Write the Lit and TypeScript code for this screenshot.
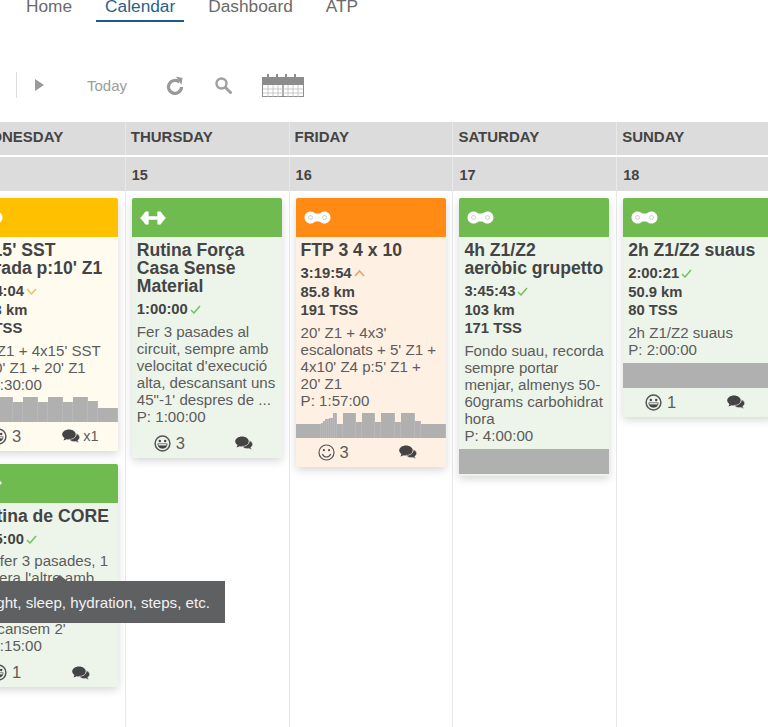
import { LitElement, html, css, svg } from "lit";
import { customElement } from "lit/decorators.js";

type Bar = [number, number];
interface Card {
  tone: "green" | "orange" | "yellow";
  icon: "chain" | "dumbbell";
  title: string;
  metrics: string[];
  mark: "check" | "up" | "down";
  desc: string;
  bars?: Bar[];
  flat?: boolean;
  face?: "grin" | "smile";
  count?: string;
  label?: string;
}

const chain = svg`<svg class="ic" width="27" height="13" viewBox="0 0 27 13"><path fill="#fff" d="M6.500 0.500c2.400 0 3.800 1.300 5 2.100h4c1.200-.8 2.600-2.100 5-2.100 3.300 0 6 2.600 6 6s-2.700 6-6 6c-2.400 0-3.800-1.300-5-2.100h-4c-1.200.8-2.600 2.100-5 2.100-3.300 0-6-2.600-6-6s2.700-6 6-6z"/><circle cx="6.500" cy="6.500" r="2" fill="none" stroke="#cfcfcf" stroke-width="1"/><circle cx="20.500" cy="6.500" r="2" fill="none" stroke="#cfcfcf" stroke-width="1"/></svg>`;
const dumbbell = svg`<svg class="ic" width="26" height="14" viewBox="0 0 26 14"><path fill="#fff" stroke="#fff" stroke-width=".6" stroke-linejoin="round" d="M0.500 7L3.500 3.500 5.500 .8H8.300V5.600H17.700V.8H20.500L22.500 3.500 25.500 7 22.500 10.500 20.500 13.200H17.700V8.400H8.300V13.200H5.500L3.500 10.500z"/></svg>`;
const marks = {
  check: svg`<svg class="mk" width="11" height="9" viewBox="0 0 11 9"><path d="M1 5l3 3 6-7" fill="none" stroke="#74c05a" stroke-width="1.500"/></svg>`,
  up: svg`<svg class="mk" width="11" height="9" viewBox="0 0 11 9"><path d="M1 7l4.500-5 4.500 5" fill="none" stroke="#f2a06a" stroke-width="1.800"/></svg>`,
  down: svg`<svg class="mk" width="11" height="9" viewBox="0 0 11 9"><path d="M1 2l4.500 5 4.500-5" fill="none" stroke="#f4c560" stroke-width="1.800"/></svg>`,
};
const grin = svg`<svg width="17" height="17" viewBox="0 0 17 17"><circle cx="8.500" cy="8.500" r="7.400" fill="none" stroke="#555" stroke-width="1.500"/><circle cx="5.800" cy="6" r="1.200" fill="#444"/><circle cx="11.200" cy="6" r="1.200" fill="#444"/><path d="M3.500 8.600h10c0 3.200-2.200 5.200-5 5.200s-5-2-5-5.200z" fill="#444"/><path d="M4.400 9.200h8.200v1.200H4.400z" fill="#fff"/></svg>`;
const smile = svg`<svg width="17" height="17" viewBox="0 0 17 17"><circle cx="8.500" cy="8.500" r="7.500" fill="none" stroke="#555" stroke-width="1.200"/><circle cx="5.900" cy="6.200" r="1.100" fill="#555"/><circle cx="11.100" cy="6.200" r="1.100" fill="#555"/><path d="M4.300 10c.9 2 2.400 3 4.200 3s3.300-1 4.200-3" fill="none" stroke="#555" stroke-width="1.200"/></svg>`;
const comment = svg`<svg width="18" height="14" viewBox="0 0 18 14"><path fill="#444" d="M7 .5c3.800 0 6.800 2.200 6.800 5S10.800 10.500 7 10.500c-.8 0-1.500-.1-2.200-.3L1.500 11.500l1-2.600C1.100 8 .2 6.800.2 5.500.2 2.700 3.200.5 7 .5z"/><path fill="#444" stroke="#eee" stroke-width=".6" d="M14.400 4.600c2 .7 3.300 2 3.300 3.700 0 1.200-.7 2.300-1.900 3l.9 2.400-3-1.200c-.5.100-1 .2-1.600.2-2.200 0-4.100-1-4.900-2.400 4 .2 7.200-2.300 7.200-5.700z"/></svg>`;

const wedBars: Bar[] = [[45, 25], [10, 20], [15, 25], [10, 20], [15, 25], [10, 20], [15, 25], [10, 21], [20, 14]];
const friBars: Bar[] = [[25, 14], [2, 15], [2, 17], [2, 19], [2, 19], [2, 20], [2, 20], [2, 25], [2, 25], [6, 14], [13, 25], [6, 16], [13, 25], [6, 16], [14, 25], [6, 16], [14, 25], [6, 17], [25, 14]];

const columns: { dow: string; date: string; cards: Card[] }[] = [
  {
    dow: "WEDNESDAY",
    date: "",
    cards: [
      { tone: "yellow", icon: "chain", title: "4x15' SST<br>Parada p:10' Z1", metrics: ["4:24:04", "98.3 km", "90 TSS"], mark: "down", desc: "20' Z1 + 4x15' SST<br>p:10' Z1 + 20' Z1<br>P: 4:30:00", bars: wedBars, face: "grin", count: "3", label: "x1" },
      { tone: "green", icon: "dumbbell", title: "Rutina de CORE", metrics: ["0:15:00"], mark: "check", desc: "Cal fer 3 pasades, 1<br>Espera l'altre amb<br>calma, i entre<br>cada pasada<br>descansem 2'<br>P: 0:15:00", face: "grin", count: "1" },
    ],
  },
  {
    dow: "THURSDAY",
    date: "15",
    cards: [{ tone: "green", icon: "dumbbell", title: "Rutina Força Casa Sense Material", metrics: ["1:00:00"], mark: "check", desc: "Fer 3 pasades al circuit, sempre amb velocitat d'execució alta, descansant uns 45\"-1' despres de ...<br>P: 1:00:00", face: "grin", count: "3" }],
  },
  {
    dow: "FRIDAY",
    date: "16",
    cards: [{ tone: "orange", icon: "chain", title: "FTP 3 4 x 10", metrics: ["3:19:54", "85.8 km", "191 TSS"], mark: "up", desc: "20' Z1 + 4x3' escalonats + 5' Z1 + 4x10' Z4 p:5' Z1 + 20' Z1<br>P: 1:57:00", bars: friBars, face: "smile", count: "3" }],
  },
  {
    dow: "SATURDAY",
    date: "17",
    cards: [{ tone: "green", icon: "chain", title: "4h Z1/Z2<br>aeròbic grupetto", metrics: ["3:45:43", "103 km", "171 TSS"], mark: "check", desc: "Fondo suau, recorda sempre portar menjar, almenys 50-60grams carbohidrat hora<br>P: 4:00:00", flat: true }],
  },
  {
    dow: "SUNDAY",
    date: "18",
    cards: [{ tone: "green", icon: "chain", title: "2h Z1/Z2 suaus", metrics: ["2:00:21", "50.9 km", "80 TSS"], mark: "check", desc: "2h Z1/Z2 suaus<br>P: 2:00:00", flat: true, face: "grin", count: "1" }],
  },
];

const lines = (text: string) => {
  const parts = text.split("<br>");
  return parts.map((p, i) => (i < parts.length - 1 ? html`${p}<br />` : html`${p}`));
};

@customElement("app-root")
export class AppRoot extends LitElement {
  static styles = css`
    :host {
      display: block;
      position: relative;
      width: 768px;
      height: 727px;
      overflow: hidden;
      background: #fff;
      font-family: "Liberation Sans", Arial, sans-serif;
      color: #444;
    }
    .nav {
      display: flex;
      gap: 15px;
      padding-left: 17px;
      margin-top: -4px;
      font-size: 17.300px;
      line-height: 20px;
      color: #6a6a6a;
    }
    .nav span {
      padding: 0 9px 4px;
      border-bottom: 2px solid transparent;
    }
    .nav .on {
      color: #2c5f88;
      border-bottom-color: #1b5a8c;
    }
    .tools {
      display: flex;
      align-items: center;
      height: 26px;
      margin: 50px 0 24px 16px;
      border-left: 1px solid #ddd;
    }
    .tools .tri { margin-left: 18px; }
    .tools .today { margin-left: 43px; font-size: 15px; color: #9c9c9c; width: 40px; }
    .tools .refresh { margin-left: 39px; }
    .tools .search { margin-left: 31px; }
    .tools .cal { margin-left: 30px; }
    .grid {
      display: grid;
      grid-template-columns: repeat(5, 163.800px);
      margin-left: -39px;
      height: 605px;
    }
    .col {
      display: flex;
      flex-direction: column;
      min-width: 0;
    }
    .dow, .date {
      background: #dcdcdc;
      border-left: 1px solid #e9e9e9;
      font-weight: bold;
      color: #444;
      white-space: nowrap;
    }
    .dow {
      height: 33px;
      line-height: 30px;
      font-size: 15px;
      padding-left: 5px;
      margin-bottom: 2px;
    }
    .date {
      height: 34px;
      line-height: 37px;
      font-size: 14.500px;
      padding-left: 6px;
    }
    .body {
      flex: 1;
      border-left: 1px solid #e8e8e8;
      padding: 7px 0 0 6px;
    }
    .card {
      width: 150px;
      margin-bottom: 13px;
      border-radius: 2px;
      box-shadow: 0 3px 8px rgba(0, 0, 0, 0.16);
    }
    .card.green { background: #edf5ea; }
    .card.orange { background: #fef0e3; }
    .card.yellow { background: #fffbef; }
    .bar {
      height: 39px;
      display: flex;
      align-items: center;
      padding-left: 8px;
      border-radius: 2px 2px 0 0;
    }
    .green .bar { background: #70bb50; }
    .orange .bar { background: #ff8a14; }
    .yellow .bar { background: #ffc000; }
    .main { padding: 4px 4px 0 5px; }
    .title {
      font-size: 17.600px;
      line-height: 18px;
      font-weight: bold;
      color: #444;
    }
    .metrics {
      margin-top: 5px;
      font-size: 14.800px;
      line-height: 18.500px;
      font-weight: bold;
      color: #444;
    }
    .mk { margin-left: 2px; }
    .desc {
      margin-top: 4px;
      font-size: 15.100px;
      line-height: 17px;
      color: #5c5c5c;
    }
    .chart {
      display: flex;
      align-items: flex-end;
      height: 25px;
      margin-top: 4px;
    }
    .chart i {
      display: block;
      box-sizing: border-box;
      background: #b0b0b0;
      border-right: 1px solid #b8b8b8;
    }
    .flat {
      height: 25px;
      margin-top: 5px;
      background: #b0b0b0;
    }
    .foot {
      display: grid;
      grid-template-columns: 1fr 1fr;
      height: 29px;
      align-items: center;
      justify-items: center;
      font-size: 16.500px;
      color: #5c5c5c;
    }
    .plain .foot { margin-top: 4px; }
    .foot div { display: flex; align-items: center; gap: 5px; }
    .foot .lbl { font-size: 14.500px; margin-left: -2px; }
    .end { height: 2px; }
    .tip {
      position: absolute;
      left: 0;
      top: 581px;
      width: 225px;
      height: 42px;
      display: flex;
      align-items: center;
      justify-content: flex-end;
      padding-right: 15px;
      box-sizing: border-box;
      background: #5f6062;
      color: #f2f2f2;
      font-size: 15.150px;
      white-space: nowrap;
    }
    .tip span { flex: none; }
    .tip::before {
      content: "";
      position: absolute;
      left: 53px;
      top: -6px;
      border: 7px solid transparent;
      border-top: 0;
      border-bottom: 6px solid #5f6062;
    }
  `;

  private renderCard(c: Card) {
    return html`<div class="card ${c.tone} ${c.bars || c.flat ? "" : "plain"}">
      <div class="bar">${c.icon === "chain" ? chain : dumbbell}</div>
      <div class="main">
        <div class="title">${lines(c.title)}</div>
        <div class="metrics">
          ${c.metrics.map((m, i) => html`<div>${m}${i === 0 ? marks[c.mark] : ""}</div>`)}
        </div>
        <div class="desc">${lines(c.desc)}</div>
      </div>
      ${c.bars
        ? html`<div class="chart">
            ${c.bars.map(([w, h]) => html`<i style="width:${w}px;height:${h}px"></i>`)}
          </div>`
        : ""}
      ${c.flat ? html`<div class="flat"></div>` : ""}
      ${c.face
        ? html`<div class="foot">
            <div>${c.face === "grin" ? grin : smile}<span>${c.count}</span></div>
            <div>${comment}${c.label ? html`<span class="lbl">${c.label}</span>` : ""}</div>
          </div>`
        : html`<div class="end"></div>`}
    </div>`;
  }

  render() {
    return html`
      <div class="nav">
        <span>Home</span><span class="on">Calendar</span><span>Dashboard</span><span>ATP</span>
      </div>
      <div class="tools">
        <svg class="tri" width="9" height="12" viewBox="0 0 9 12"><path d="M0 0l9 6-9 6z" fill="#9a9a9a" /></svg>
        <span class="today">Today</span>
        <svg class="refresh" width="18" height="19" viewBox="0 0 18 19">
          <path d="M13.500 6.200A6.500 6.500 0 1 0 15.500 11" fill="none" stroke="#999" stroke-width="3.200" />
          <path d="M10 0.500l6.500 1.500-1 6.800z" fill="#999" />
        </svg>
        <svg class="search" width="17" height="17" viewBox="0 0 17 17">
          <circle cx="6.500" cy="6.500" r="5" fill="none" stroke="#a0a0a0" stroke-width="2.400" />
          <path d="M10.500 10.500l5 5" stroke="#a0a0a0" stroke-width="3" stroke-linecap="round" />
        </svg>
        <svg class="cal" width="42" height="23" viewBox="0 0 42 23">
          <rect x="0.500" y="3.500" width="41" height="19" fill="#fff" stroke="#8f8f8f" />
          <rect x="0" y="3" width="42" height="8" fill="#8c8c8c" />
          <path d="M6 0v4M15 0v4M24 0v4M33 0v4" stroke="#8c8c8c" stroke-width="2" />
          <path d="M21 11v12" stroke="#777" stroke-width="1.200" />
          <path d="M1 15h40M1 19h40M6 11v12M11 11v12M16 11v12M26 11v12M31 11v12M36 11v12" stroke="#bdbdbd" stroke-width="0.800" />
        </svg>
      </div>
      <div class="grid">
        ${columns.map(
          (col) => html`<div class="col">
            <div class="dow">${col.dow}</div>
            <div class="date">${col.date}</div>
            <div class="body">${col.cards.map((c) => this.renderCard(c))}</div>
          </div>`
        )}
      </div>
      <div class="tip"><span>weight, sleep, hydration, steps, etc.</span></div>
    `;
  }
}
